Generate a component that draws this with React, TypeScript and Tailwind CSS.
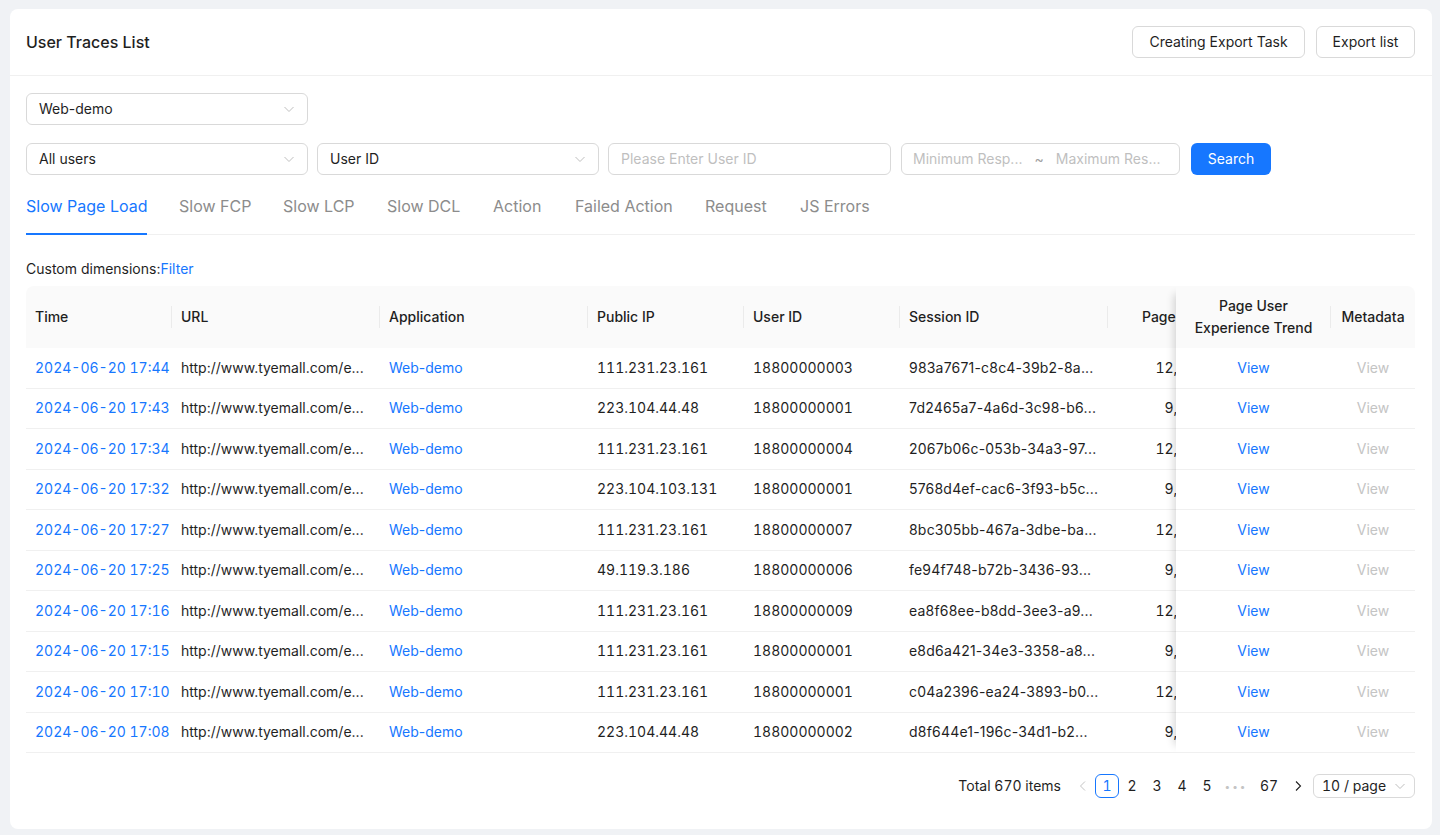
import React from "react";

const font = { fontFamily: "Inter, 'Noto Sans', sans-serif" };

const rows = [
  ["2024-06-20 17:44", "111.231.23.161", "18800000003", "983a7671-c8c4-39b2-8a...", "12,486 ms"],
  ["2024-06-20 17:43", "223.104.44.48", "18800000001", "7d2465a7-4a6d-3c98-b6...", "9,734 ms"],
  ["2024-06-20 17:34", "111.231.23.161", "18800000004", "2067b06c-053b-34a3-97...", "12,108 ms"],
  ["2024-06-20 17:32", "223.104.103.131", "18800000001", "5768d4ef-cac6-3f93-b5c...", "9,512 ms"],
  ["2024-06-20 17:27", "111.231.23.161", "18800000007", "8bc305bb-467a-3dbe-ba...", "12,377 ms"],
  ["2024-06-20 17:25", "49.119.3.186", "18800000006", "fe94f748-b72b-3436-93...", "9,205 ms"],
  ["2024-06-20 17:16", "111.231.23.161", "18800000009", "ea8f68ee-b8dd-3ee3-a9...", "12,650 ms"],
  ["2024-06-20 17:15", "111.231.23.161", "18800000001", "e8d6a421-34e3-3358-a8...", "9,871 ms"],
  ["2024-06-20 17:10", "111.231.23.161", "18800000001", "c04a2396-ea24-3893-b0...", "12,043 ms"],
  ["2024-06-20 17:08", "223.104.44.48", "18800000002", "d8f644e1-196c-34d1-b2...", "9,318 ms"],
];

// tab label + fixed width so the tab starts line up with the design
const tabs = [
  ["Slow Page Load", "w-[121px]"],
  ["Slow FCP", "w-[72px]"],
  ["Slow LCP", "w-[72px]"],
  ["Slow DCL", "w-[74px]"],
  ["Action", "w-[50px]"],
  ["Failed Action", "w-[98px]"],
  ["Request", "w-[63px]"],
  ["JS Errors", "w-[70px]"],
];

function Chevron({ className = "" }: { className?: string }) {
  return (
    <svg viewBox="0 0 12 12" className={`h-3 w-3 ${className}`} fill="none" stroke="currentColor" strokeWidth="1">
      <polyline points="1.5,4 6,8.5 10.5,4" />
    </svg>
  );
}

function Select({ value, w }: { value: string; w: string }) {
  return (
    <div className={`flex h-8 ${w} items-center justify-between rounded-md border border-[#d9d9d9] bg-white pl-3 pr-3 text-sm text-[#1f1f1f]`}>
      <span>{value}</span>
      <Chevron className="text-[#bfbfbf]" />
    </div>
  );
}

const sep = "after:absolute after:right-0 after:top-1/2 after:h-[22px] after:w-px after:-translate-y-1/2 after:bg-[#ebebeb] after:content-['']";

export default function App() {
  return (
    <div className="min-h-[835px] bg-[#f0f2f5] pl-[10px] pr-[8px] pt-[9px]" style={font}>
      <div className="h-[820px] rounded-lg bg-white">
        {/* header */}
        <div className="flex h-[67px] items-center justify-between border-b border-[#f0f0f0] pl-4 pr-[17px]">
          <h1 className="text-base font-medium text-[#1f1f1f]">User Traces List</h1>
          <div className="flex gap-[11px]">
            <button className="h-8 w-[173px] rounded-md border border-[#d9d9d9] text-sm text-[#1f1f1f]">Creating Export Task</button>
            <button className="h-8 w-[99px] rounded-md border border-[#d9d9d9] text-sm text-[#1f1f1f]">Export list</button>
          </div>
        </div>

        <div className="pl-4 pr-[17px] pt-[17px]">
          <Select value="Web-demo" w="w-[282px]" />
          <div className="mt-[18px] flex items-center gap-[9px]">
            <Select value="All users" w="w-[282px]" />
            <Select value="User ID" w="w-[282px]" />
            <div className="flex h-8 w-[283px] items-center rounded-md border border-[#d9d9d9] px-3 text-sm text-[#bfbfbf]">
              Please Enter User ID
            </div>
            <div className="ml-[1px] flex h-8 w-[279px] items-center rounded-md border border-[#d9d9d9] px-[11px] text-sm text-[#bfbfbf]">
              <span>Minimum Resp...</span>
              <span className="mx-[12px] text-[#a0a0a0]">~</span>
              <span>Maximum Res...</span>
            </div>
            <button className="ml-[2px] h-8 w-20 rounded-md bg-[#1677ff] text-sm text-white">Search</button>
          </div>

          {/* tabs */}
          <div className="mt-2 flex gap-8 border-b border-[#f0f0f0]">
            {tabs.map(([t, w], i) => (
              <div
                key={t}
                className={`${w} -mb-px whitespace-nowrap pt-3 pb-[16px] text-base leading-[22px] ${
                  i === 0 ? "border-b-2 border-[#1677ff] text-[#1677ff]" : "border-b-2 border-transparent text-[#8c8c8c]"
                }`}
              >
                {t}
              </div>
            ))}
          </div>

          <div className="mt-[23px] text-sm leading-[22px] text-[#1f1f1f]">
            Custom dimensions:<span className="text-[#1677ff]">Filter</span>
          </div>

          {/* table */}
          <div className="mt-[6px] flex text-sm text-[#1f1f1f]">
            <div className="flex-1">
              <div className="flex h-[62px] items-center rounded-tl-lg bg-[#fafafa] font-medium">
                <div className={`relative w-[146px] pl-[9px] ${sep}`}>Time</div>
                <div className={`relative w-[208px] pl-[9px] ${sep}`}>URL</div>
                <div className={`relative w-[208px] pl-[9px] ${sep}`}>Application</div>
                <div className={`relative w-[156px] pl-[9px] ${sep}`}>Public IP</div>
                <div className={`relative w-[156px] pl-[9px] ${sep}`}>User ID</div>
                <div className={`relative w-[208px] pl-[9px] ${sep}`}>Session ID</div>
                <div className="w-[68px] overflow-hidden whitespace-nowrap pl-[34px]">Page Load Time</div>
              </div>
              {rows.map((r) => (
                <div key={r[0]} className="flex h-[40.5px] items-center border-b border-[#f0f0f0]">
                  <div className="w-[146px] whitespace-nowrap pl-[9px] text-[#1677ff] tabular-nums">{r[0]}</div>
                  <div className="w-[208px] whitespace-nowrap pl-[9px]">http://www.tyemall.com/e...</div>
                  <div className="w-[208px] pl-[9px] text-[#1677ff]">Web-demo</div>
                  <div className="w-[156px] pl-[9px] tabular-nums">{r[1]}</div>
                  <div className="w-[156px] pl-[9px] tabular-nums">{r[2]}</div>
                  <div className="w-[208px] overflow-hidden whitespace-nowrap pl-[9px] tracking-[0.2px]">{r[3]}</div>
                  <div className="flex w-[68px] justify-end overflow-hidden whitespace-nowrap tabular-nums">
                    <span className="mr-[-52px] shrink-0">{r[4]}</span>
                  </div>
                </div>
              ))}
            </div>
            <div className="relative z-10 w-[239px] bg-white shadow-[-10px_0_8px_-8px_rgba(0,0,0,0.16)]">
              <div className="flex h-[62px] items-center rounded-tr-lg bg-[#fafafa] text-center font-medium leading-[22px]">
                <div className={`relative w-[155px] ${sep}`}>
                  Page User
                  <br />
                  Experience Trend
                </div>
                <div className="w-[84px]">Metadata</div>
              </div>
              {rows.map((r) => (
                <div key={r[0]} className="flex h-[40.5px] items-center border-b border-[#f0f0f0] text-center">
                  <div className="w-[155px] text-[#1677ff]">View</div>
                  <div className="w-[84px] text-[#c4c4c4]">View</div>
                </div>
              ))}
            </div>
          </div>

          {/* pagination */}
          <div className="mt-[17px] flex h-8 items-center justify-end text-sm text-[#1f1f1f] tabular-nums">
            <span className="mr-[10px]">Total 670 items</span>
            <div className="flex items-center">
              <span className="flex h-6 w-6 items-center justify-center text-[#c4c4c4]">
                <svg viewBox="0 0 12 12" className="h-3 w-3" fill="none" stroke="currentColor" strokeWidth="1">
                  <polyline points="8,1.5 3.5,6 8,10.5" />
                </svg>
              </span>
              <span className="flex h-6 w-6 items-center justify-center rounded-md border border-[#1677ff] text-[#1677ff]">1</span>
              {["2", "3", "4", "5"].map((p) => (
                <span key={p} className="ml-[1px] flex h-6 w-6 items-center justify-center">{p}</span>
              ))}
              <span className="ml-[1px] flex h-6 w-8 items-center justify-center text-[10px] tracking-[2px] text-[#c4c4c4]">•••</span>
              <span className="ml-[1px] flex h-6 w-8 items-center justify-center">67</span>
              <span className="ml-[1px] flex h-6 w-6 items-center justify-center text-[#1f1f1f]">
                <svg viewBox="0 0 12 12" className="h-3 w-3" fill="none" stroke="currentColor" strokeWidth="1.1">
                  <polyline points="4,1.5 8.5,6 4,10.5" />
                </svg>
              </span>
              <div className="ml-[3px] flex h-6 w-[102px] items-center justify-between rounded-md border border-[#d9d9d9] px-2">
                <span>10 / page</span>
                <Chevron className="text-[#bfbfbf]" />
              </div>
            </div>
          </div>
        </div>
      </div>
    </div>
  );
}
